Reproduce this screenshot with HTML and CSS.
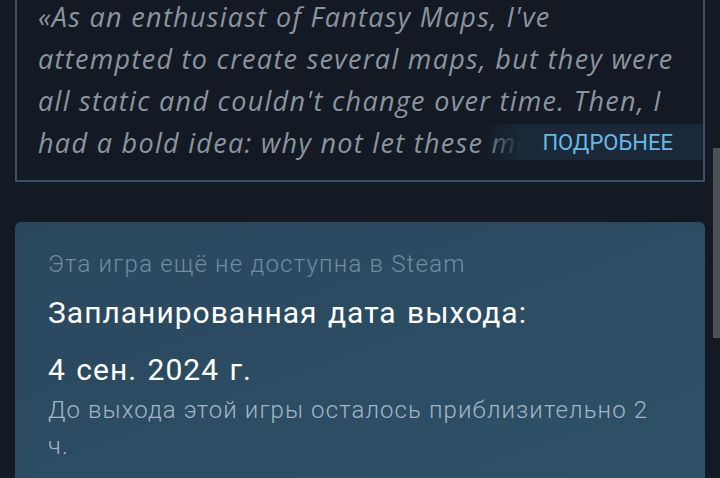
FILE: index.html
```html
<!DOCTYPE html>
<html lang="ru">
<head>
    <meta charset="UTF-8">
    <meta name="viewport" content="width=device-width, initial-scale=1.0">
    <title>Fantasy Maps</title>
    <link rel="stylesheet" href="styles.css">
</head>
<body>
<div class="page">
    <div class="quote">
        <p class="quote-text">«As an enthusiast of Fantasy Maps, I've<br>attempted to create several maps, but they were<br>all static and couldn't change over time. Then, I<br>had a bold idea: why not let these maps evolve over time?</p>
        <div class="read-more">ПОДРОБНЕЕ</div>
    </div>

    <div class="release">
        <div class="release-note">Эта игра ещё не доступна в Steam</div>
        <div class="release-title">Запланированная дата выхода:</div>
        <div class="release-date">4 сен. 2024 г.</div>
        <div class="release-left">До выхода этой игры осталось приблизительно 2 ч.</div>
    </div>
</div>
<div class="scrollbar"></div>
</body>
</html>
```

FILE: styles.css
```css
body {
    margin: 0;
    background: #131a23;
    font-family: Roboto, "Liberation Sans", sans-serif;
    overflow: hidden;
}

.page {
    padding: 0 15px;
}

.quote {
    position: relative;
    margin-top: -22px;
    padding: 16px 21px 16px 21px;
    border: 2px solid #3b5068;
    border-top-color: transparent;
}

.quote-text {
    margin: 0;
    height: 168px;
    overflow: hidden;
    white-space: nowrap;
    font-family: "Open Sans", Lato, sans-serif;
    font-style: italic;
    font-size: 27px;
    letter-spacing: 1.3px;
    line-height: 42px;
    color: #8c959f;
}

.read-more {
    position: absolute;
    right: 0;
    bottom: 20px;
    width: 222px;
    height: 36px;
    padding-right: 30px;
    box-sizing: border-box;
    display: flex;
    align-items: center;
    justify-content: flex-end;
    font-size: 22px;
    color: #68b8e8;
    background: linear-gradient(to right, rgba(27, 40, 56, 0) 0, #1b2838 40px, #1b2838 100%);
}

.release {
    margin-top: 40px;
    padding: 27px 33px 50px;
    border-radius: 6px;
    background: linear-gradient(160deg, #2a475d 0%, #2e5269 100%);
}

.release-note {
    font-size: 24px;
    font-weight: 300;
    letter-spacing: 1.2px;
    line-height: 30px;
    color: #6f8ca3;
}

.release-title,
.release-date {
    font-size: 30px;
    letter-spacing: 1px;
    word-spacing: 2px;
    line-height: 36px;
    color: #ffffff;
}

.release-title {
    margin-top: 16px;
}

.release-date {
    margin-top: 21px;
}

.release-left {
    margin-top: 4px;
    font-size: 24px;
    font-weight: 300;
    letter-spacing: 1.1px;
    line-height: 36px;
    color: #a3b6c6;
}

.scrollbar {
    position: fixed;
    top: 148px;
    right: 0;
    width: 7px;
    height: 190px;
    background: #4d5259;
}
```
